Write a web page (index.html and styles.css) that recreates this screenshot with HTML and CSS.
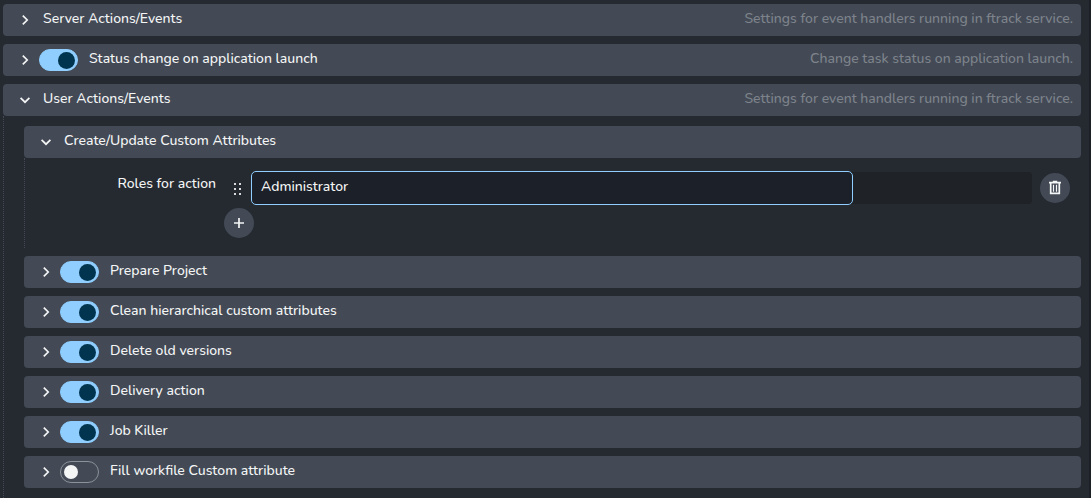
FILE: index.html
```
<!DOCTYPE html>
<html lang="en">
<head>
<meta charset="utf-8">
<title>Settings</title>
<link rel="stylesheet" href="styles.css">
</head>
<body>
<svg width="0" height="0" class="defs" aria-hidden="true">
  <symbol id="right" viewBox="0 0 16 16"><path d="M5.8 3.7 10.2 8l-4.4 4.3"/></symbol>
  <symbol id="down" viewBox="0 0 16 16"><path d="M3.6 5.8 8 10.2l4.4-4.4"/></symbol>
</svg>
<main class="panel">
  <div class="bar"><svg class="chev"><use href="#right"/></svg><span class="title t-server">Server Actions/Events</span><span class="hint h-events">Settings for event handlers running in ftrack service.</span></div>
  <div class="bar"><svg class="chev"><use href="#right"/></svg><span class="switch on"></span><span class="title t-status">Status change on application launch</span><span class="hint h-launch">Change task status on application launch.</span></div>
  <section>
    <div class="bar"><svg class="chev"><use href="#down"/></svg><span class="title t-user">User Actions/Events</span><span class="hint h-events">Settings for event handlers running in ftrack service.</span></div>
    <div class="children">
      <section class="group">
        <div class="bar"><svg class="chev"><use href="#down"/></svg><span class="title t-create">Create/Update Custom Attributes</span></div>
        <div class="form">
          <span class="label"><span class="t-roles">Roles for action</span></span>
          <div class="list">
            <div class="row">
              <svg class="drag" viewBox="0 0 10 14"><path d="M1 1h2v2H1zM6 1h2v2H6zM1 6h2v2H1zM6 6h2v2H6zM1 11h2v2H1zM6 11h2v2H6z"/></svg>
              <div class="track"><div class="input"><span class="t-admin">Administrator</span></div></div>
              <span class="round"><svg class="trash" viewBox="0 0 14 16"><path d="M1 2.7h12M4.8 1.6h4.4M2.7 3v10.3h8.6V3"/><path class="thin" d="M5.5 4.7v7M8.5 4.7v7"/></svg></span>
            </div>
            <span class="round"><svg class="plus" viewBox="0 0 12 12"><path d="M6 1v10M1 6h10"/></svg></span>
          </div>
        </div>
      </section>
      <div class="bar"><svg class="chev"><use href="#right"/></svg><span class="switch on"></span><span class="title t-prepare">Prepare Project</span></div>
      <div class="bar"><svg class="chev"><use href="#right"/></svg><span class="switch on"></span><span class="title t-clean">Clean hierarchical custom attributes</span></div>
      <div class="bar"><svg class="chev"><use href="#right"/></svg><span class="switch on"></span><span class="title t-delete">Delete old versions</span></div>
      <div class="bar"><svg class="chev"><use href="#right"/></svg><span class="switch on"></span><span class="title t-delivery">Delivery action</span></div>
      <div class="bar"><svg class="chev"><use href="#right"/></svg><span class="switch on"></span><span class="title t-job">Job Killer</span></div>
      <div class="bar"><svg class="chev"><use href="#right"/></svg><span class="switch"></span><span class="title t-fill">Fill workfile Custom attribute</span></div>
    </div>
  </section>
</main>
</body>
</html>
```
FILE: styles.css
```
* { box-sizing: border-box; }
body { margin: 0; height: 498px; overflow: hidden; background: #252a31; color: #f4f5f5; font: 500 14px/20px Nunito, "Open Sans", "Noto Sans", sans-serif; }
.defs { position: absolute; }
.panel { height: 498px; padding: 4px 8px 0 3px; border-right: 2px solid #1c2026; display: flex; flex-direction: column; gap: 8px; }
.bar { height: 32px; flex: none; display: flex; align-items: center; padding: 0 8px 0 14px; background: #434a56; border-radius: 4px; white-space: nowrap; }
.children .bar { padding-left: 14px; }
.chev { width: 16px; height: 16px; flex: none; fill: none; stroke: #f4f5f5; stroke-width: 1.7; }
.switch { width: 39px; height: 22px; margin-left: 6px; flex: none; border-radius: 11px; border: 1px solid #8b9198; display: flex; align-items: center; padding-left: 3px; }
.switch::before { content: ""; width: 14px; height: 14px; border-radius: 50%; background: #f4f5f5; }
.switch.on { background: #8fceff; border-color: #8fceff; padding-left: 18px; }
.switch.on::before { width: 17px; height: 17px; background: #00344f; }
.title { margin-left: 10px; position: relative; top: -1px; }
.switch + .title { margin-left: 11px; }
.hint { margin-left: auto; color: #7e838b; position: relative; top: -1px; }
.children { border-left: 1px dotted #434a56; padding: 10px 0 10px 20px; display: flex; flex-direction: column; gap: 8px; }
.form { height: 90px; border-left: 1px dotted #434a56; padding-top: 13px; display: flex; }
.label { width: 191px; padding-top: 3px; text-align: right; white-space: nowrap; }
.list { flex: 1; padding: 0 11px 0 8px; }
.row { height: 34px; display: flex; align-items: center; margin-bottom: 3px; }
.drag { width: 10px; height: 14px; margin: 1px 8px 0 9px; fill: #d8dadd; }
.track { flex: 1; height: 32px; margin-right: 8px; border-radius: 4px; background: #1f2226; display: flex; align-items: center; }
.input { width: 602px; height: 34px; flex: none; border: 1px solid #8fceff; border-radius: 5px; background: #1c2028; padding: 5px 9px; }
.round { width: 30px; height: 30px; flex: none; border-radius: 50%; background: #434a56; display: flex; align-items: center; justify-content: center; }
.round svg { fill: none; stroke: #f4f5f5; stroke-width: 1.7; }
.round .thin { stroke-width: 1.2; }
.trash { width: 14px; height: 16px; }
.plus { width: 12px; height: 12px; }
```
